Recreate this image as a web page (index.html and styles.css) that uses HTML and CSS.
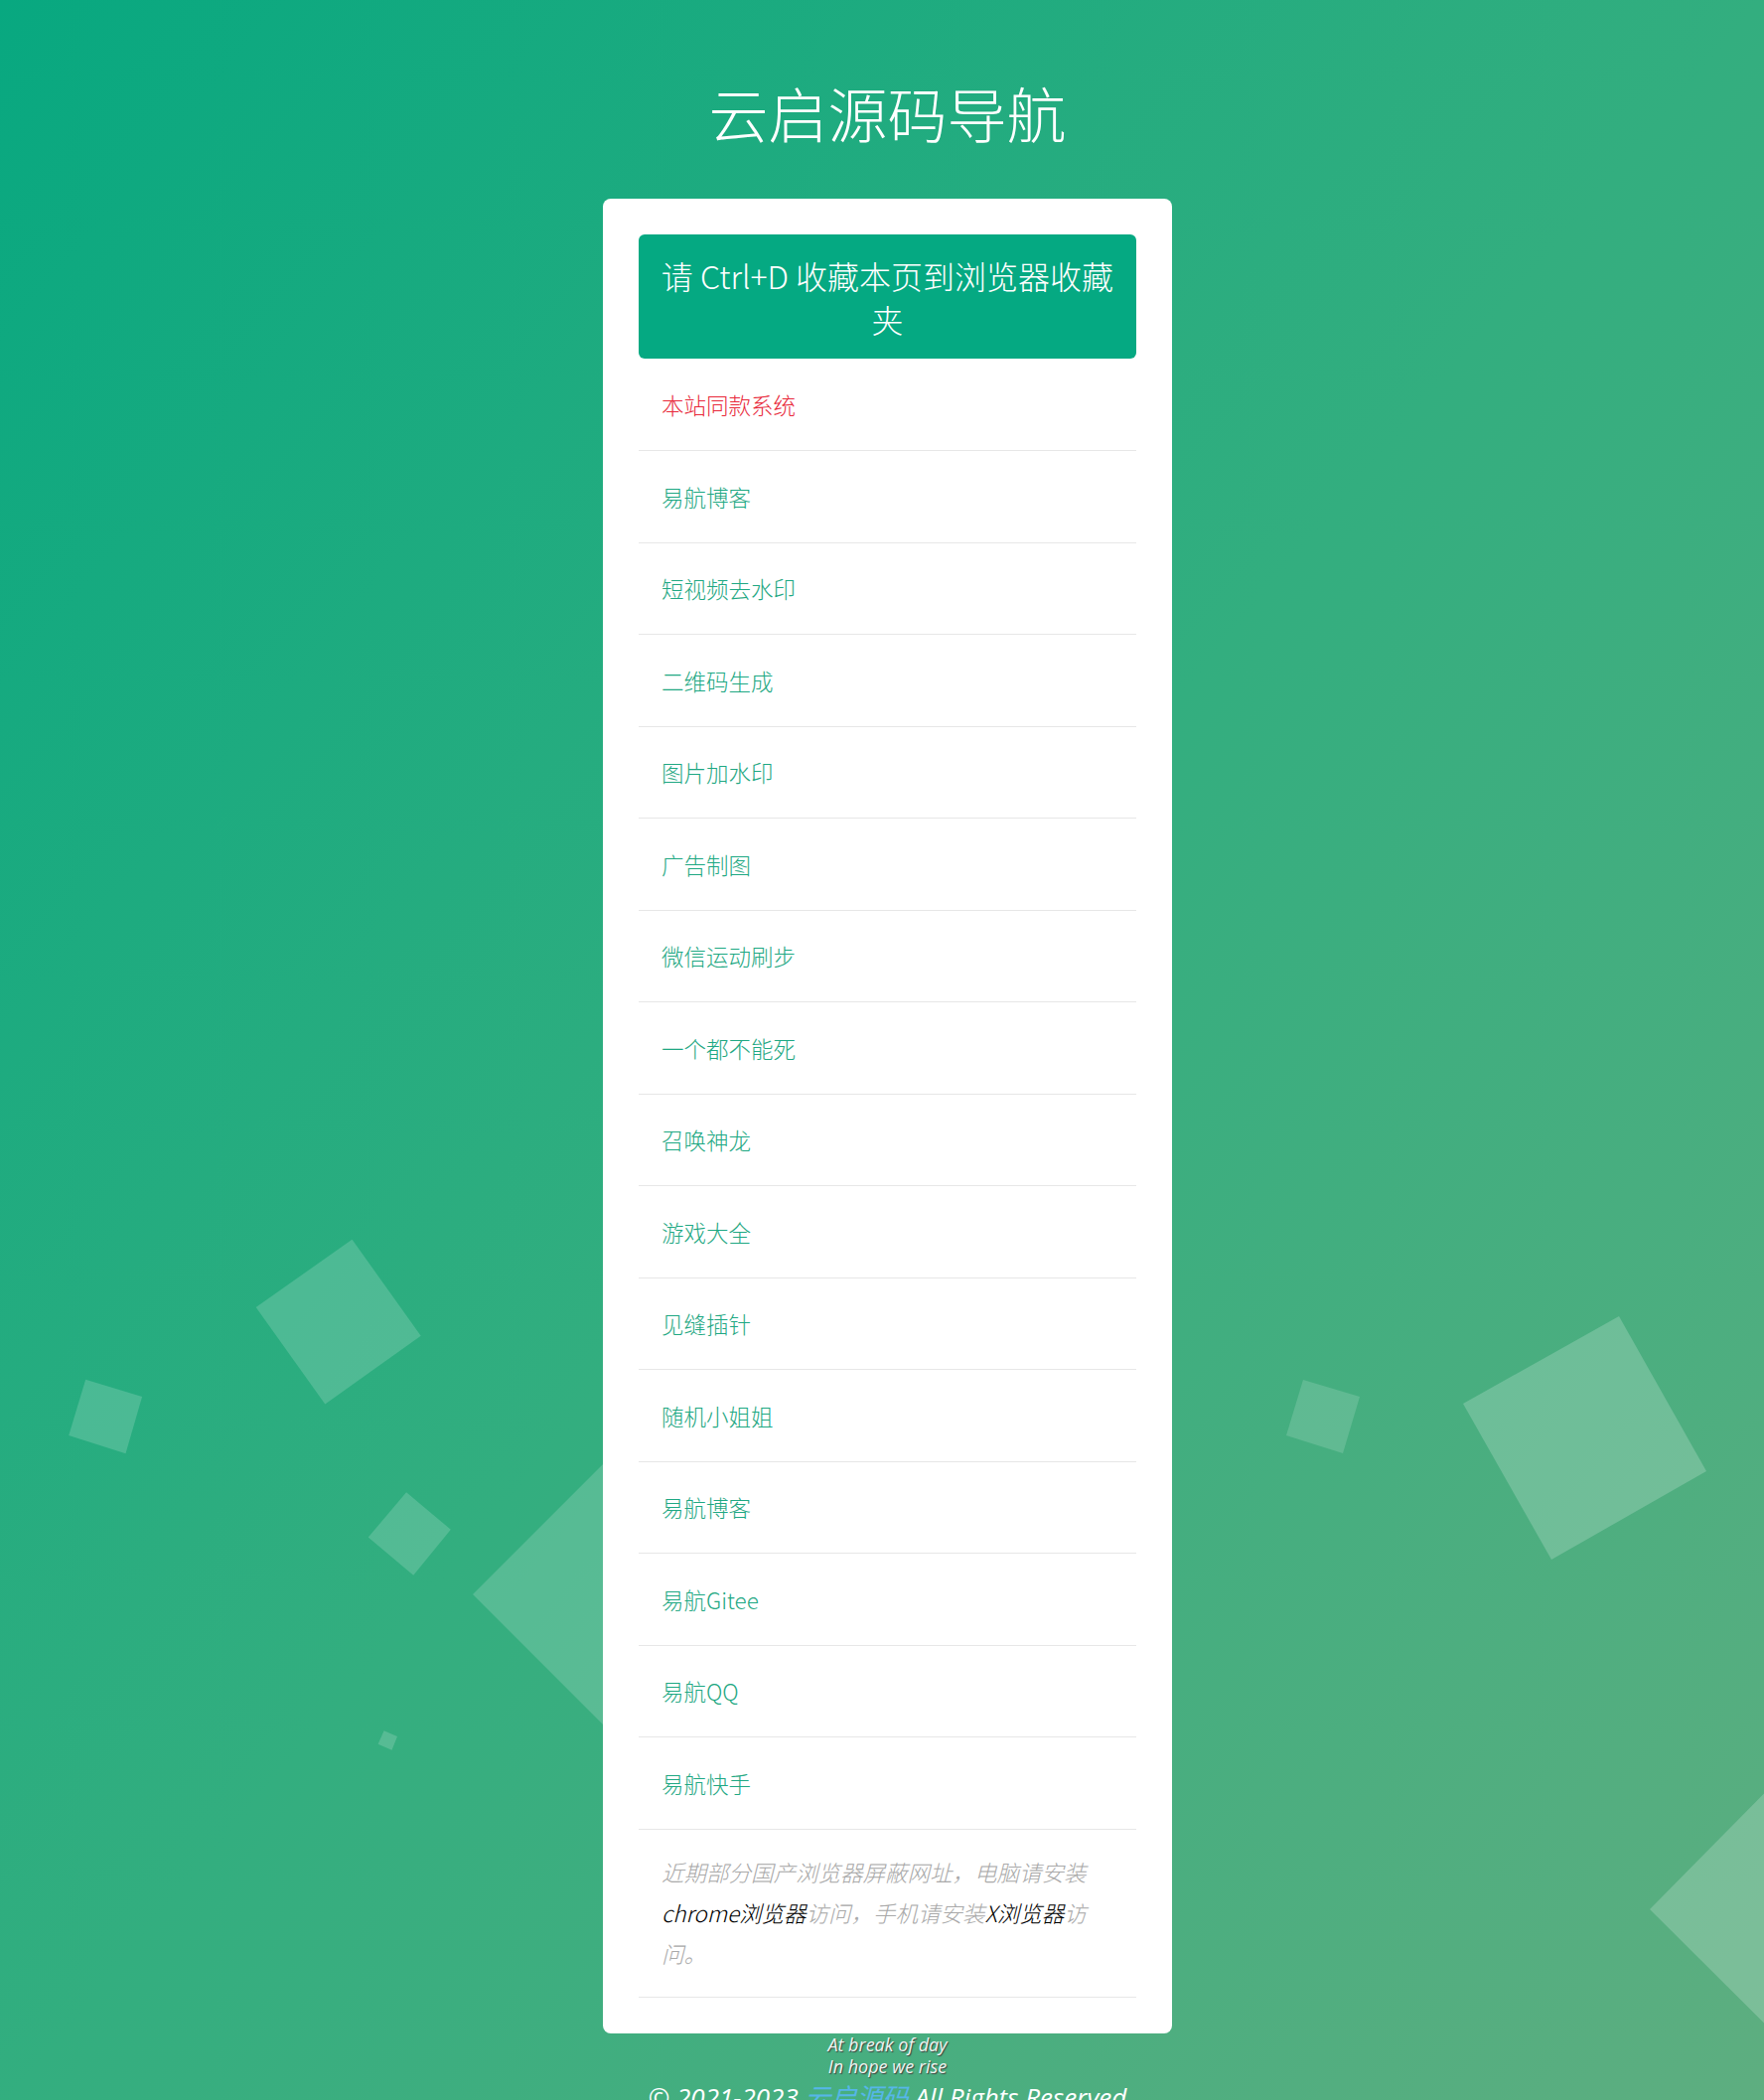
FILE: index.html
```html
<!DOCTYPE html>
<html lang="zh-CN">
<head>
<meta charset="utf-8">
<title>云启源码导航</title>
<link rel="stylesheet" href="styles.css">
</head>
<body>
<svg class="bg-shapes" viewBox="0 0 1776 2114" preserveAspectRatio="none" aria-hidden="true">
  <polygon points="354.5,1247.8 423.7,1344.7 327.3,1413.5 257.7,1316"/>
  <polygon points="86.2,1388.7 143.1,1405.9 126.5,1463.3 69.2,1444.9"/>
  <polygon points="409.1,1502.3 453.8,1539.8 416.2,1585.8 370.8,1547.5"/>
  <polygon points="476,1605 676,1405 876,1605 676,1805"/>
  <polygon points="386.6,1742.3 400,1748 394.5,1761.8 380.6,1755.7"/>
  <polygon class="light" points="1312,1389 1369,1406 1352,1463 1295,1445"/>
  <polygon class="lighter" points="1630,1325 1718,1481 1562,1570 1473,1413"/>
  <polygon class="lighter" points="1661,1922 1880,1700 2100,1922 1880,2140"/>
</svg>
<div class="wrap">
  <h1 class="site-title">云启源码导航</h1>
  <main class="card">
    <div class="banner">请 Ctrl+D 收藏本页到浏览器收藏夹</div>
    <ul class="nav-list">
      <li><a class="hot" href="#">本站同款系统</a></li>
      <li><a href="#">易航博客</a></li>
      <li><a href="#">短视频去水印</a></li>
      <li><a href="#">二维码生成</a></li>
      <li><a href="#">图片加水印</a></li>
      <li><a href="#">广告制图</a></li>
      <li><a href="#">微信运动刷步</a></li>
      <li><a href="#">一个都不能死</a></li>
      <li><a href="#">召唤神龙</a></li>
      <li><a href="#">游戏大全</a></li>
      <li><a href="#">见缝插针</a></li>
      <li><a href="#">随机小姐姐</a></li>
      <li><a href="#">易航博客</a></li>
      <li><a href="#">易航Gitee</a></li>
      <li><a href="#">易航QQ</a></li>
      <li><a href="#">易航快手</a></li>
    </ul>
    <p class="notice">近期部分国产浏览器屏蔽网址，电脑请安装<b>chrome浏览器</b>访问，手机请安装<b>X浏览器</b>访问。</p>
  </main>
  <footer class="footer">
    <div class="poem">At break of day</div>
    <div class="poem">In hope we rise</div>
    <div class="copy">© 2021-2023 <a href="#">云启源码</a> All Rights Reserved</div>
  </footer>
</div>
</body>
</html>
```
FILE: styles.css
```css
html, body {
  margin: 0;
  padding: 0;
}
body {
  position: relative;
  min-height: 2114px;
  overflow: hidden;
  background: linear-gradient(to bottom right, #08a880 0%, #33ae7f 50%, #5eae80 100%);
  font-family: "Noto Sans CJK SC", "Noto Sans", sans-serif;
  font-weight: 300;
}
.bg-shapes {
  position: absolute;
  top: 0;
  left: 0;
  width: 1776px;
  height: 2114px;
  z-index: 0;
}
.bg-shapes polygon {
  fill: rgba(255, 255, 255, 0.17);
}
.bg-shapes polygon.light {
  fill: rgba(255, 255, 255, 0.15);
}
.bg-shapes polygon.lighter {
  fill: rgba(255, 255, 255, 0.2);
}
.wrap {
  position: relative;
  z-index: 1;
  padding: 73px 0 0 11px;
  display: flex;
  flex-direction: column;
  align-items: center;
}
.site-title {
  margin: 0;
  font-size: 60px;
  line-height: 80px;
  font-weight: 300;
  color: #fff;
  text-align: center;
}
.card {
  position: relative;
  z-index: 2;
  margin-top: 47px;
  width: 573px;
  box-sizing: border-box;
  padding: 36px;
  background: #fff;
  border-radius: 8px;
}
.banner {
  background: #05a982;
  color: #fff;
  border-radius: 6px;
  padding: 18.5px 16px;
  font-size: 32px;
  line-height: 44px;
  text-align: center;
}
.nav-list {
  list-style: none;
  margin: 0;
  padding: 0;
}
.nav-list li {
  border-bottom: 1px solid #e7e7e7;
}
.nav-list a {
  display: block;
  padding: 29.75px 23px;
  font-size: 22.5px;
  line-height: 32px;
  color: #1fa883;
  text-decoration: none;
}
.nav-list li:first-child a {
  padding-top: 30.25px;
}
.nav-list a.hot {
  color: #e8293a;
}
.notice {
  margin: 0;
  padding: 22.5px 23px;
  border-bottom: 1px solid #e7e7e7;
  font-size: 22.5px;
  line-height: 41px;
  font-style: italic;
  color: #a9a9a9;
}
.notice b {
  font-weight: 300;
  color: #000;
}
.footer {
  text-align: center;
  color: #fff;
  font-style: italic;
  font-weight: 400;
  font-family: "Open Sans", "Noto Sans CJK SC", sans-serif;
}
.poem {
  font-size: 18px;
  line-height: 22px;
  color: #eef5f1;
  text-shadow: 1px 1px 1px #3f3f3f;
}
.copy {
  margin-top: 4px;
  font-size: 26px;
  line-height: 32px;
  white-space: nowrap;
}
.copy a {
  color: #56b6e8;
  text-decoration: none;
}
```
